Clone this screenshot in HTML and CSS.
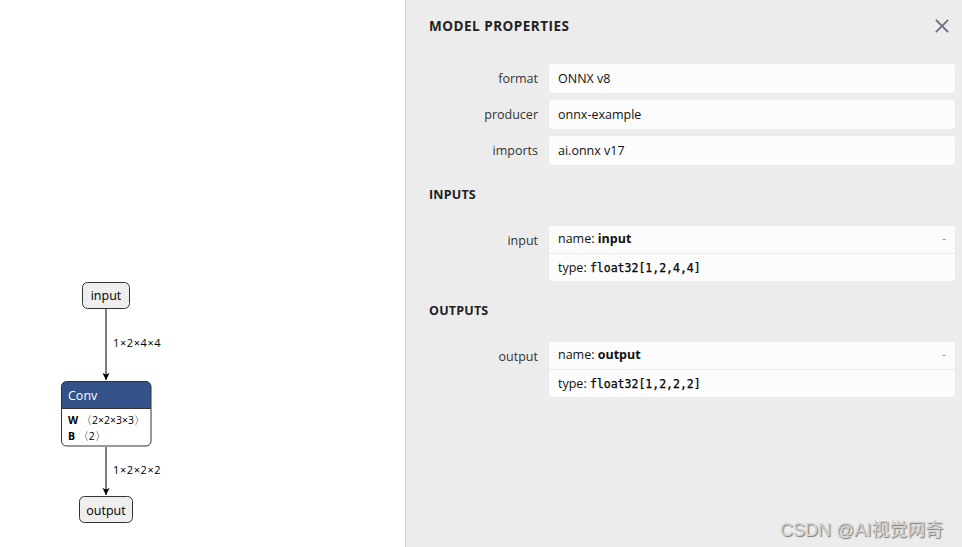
FILE: index.html
```html
<!DOCTYPE html>
<html>
<head>
<meta charset="utf-8">
<link rel="stylesheet" href="styles.css">
</head>
<body>
<div class="app">
  <div class="canvas">
    <svg class="graph" width="405" height="547" viewBox="0 0 405 547">
      <defs>
        <marker id="arrow" markerWidth="8" markerHeight="8" refX="7" refY="4" orient="auto" markerUnits="userSpaceOnUse">
          <path d="M0,0.5 L7,4 L0,7.5 L1.5,4 Z" fill="#000"/>
        </marker>
      </defs>
      <line x1="106" y1="308" x2="106" y2="380" stroke="#000" stroke-width="1" marker-end="url(#arrow)"/>
      <line x1="106" y1="447" x2="106" y2="495" stroke="#000" stroke-width="1" marker-end="url(#arrow)"/>
      <text class="edge" x="113" y="347">1×2×4×4</text>
      <text class="edge" x="113" y="474">1×2×2×2</text>

      <rect x="82.5" y="282.5" width="47" height="26" rx="5" fill="#eee" stroke="#333"/>
      <text class="nodetext" x="106" y="300" text-anchor="middle">input</text>

      <g>
        <path d="M61.5,408 V386.5 a5,5 0 0 1 5,-5 H146 a5,5 0 0 1 5,5 V408 Z" fill="#335289"/>
        <path d="M61.5,408 H151 V441 a5,5 0 0 1 -5,5 H66.5 a5,5 0 0 1 -5,-5 Z" fill="#fff"/>
        <rect x="61.5" y="381.5" width="89.5" height="64.5" rx="5" fill="none" stroke="#333"/>
        <line x1="61.5" y1="408.5" x2="151" y2="408.5" stroke="#333"/>
        <text class="nodetext white" x="68" y="400">Conv</text>
        <text class="attr" x="68" y="424"><tspan class="b">W</tspan> 〈2×2×3×3〉</text>
        <text class="attr" x="68" y="440"><tspan class="b">B</tspan> 〈2〉</text>
      </g>

      <rect x="79.5" y="496.5" width="53" height="26" rx="5" fill="#eee" stroke="#333"/>
      <text class="nodetext" x="106" y="515" text-anchor="middle">output</text>
    </svg>
    <div class="watermark">CSDN @AI视觉网奇</div>
  </div>

  <aside class="panel">
    <div class="panel-head">
      <h1 class="title">MODEL PROPERTIES</h1>
      <svg class="close" width="14" height="14" viewBox="0 0 14 14">
        <path d="M1.5,1.5 L12.5,12.5 M12.5,1.5 L1.5,12.5" stroke="#6a7380" stroke-width="1.8" stroke-linecap="square"/>
      </svg>
    </div>

    <div class="props">
      <div class="label">format</div><div class="value">ONNX v8</div>
      <div class="label">producer</div><div class="value">onnx-example</div>
      <div class="label">imports</div><div class="value">ai.onnx v17</div>
    </div>

    <h2 class="section">INPUTS</h2>
    <div class="props">
      <div class="label">input</div>
      <div class="value multi">
        <div class="line top"><span>name: <b>input</b></span><span class="dash">-</span></div>
        <div class="line">type: <code>float32[1,2,4,4]</code></div>
      </div>
    </div>

    <h2 class="section">OUTPUTS</h2>
    <div class="props">
      <div class="label">output</div>
      <div class="value multi">
        <div class="line top"><span>name: <b>output</b></span><span class="dash">-</span></div>
        <div class="line">type: <code>float32[1,2,2,2]</code></div>
      </div>
    </div>
  </aside>
</div>
</body>
</html>
```

FILE: styles.css
```css
html, body {
  margin: 0;
  padding: 0;
  width: 962px;
  height: 547px;
  overflow: hidden;
  background: #fff;
  font-family: "Open Sans", "Noto Sans", sans-serif;
}

.app {
  display: flex;
  width: 962px;
  height: 547px;
}

.canvas {
  position: relative;
  width: 405px;
  height: 547px;
  flex: none;
}

.graph {
  display: block;
}

.graph .edge {
  font-family: "Open Sans", sans-serif;
  font-size: 11px;
  letter-spacing: 0.6px;
  fill: #000;
}

.graph .nodetext {
  font-family: "Open Sans", sans-serif;
  font-size: 12.5px;
  fill: #000;
}

.graph .nodetext.white {
  fill: #fff;
}

.graph .attr {
  font-family: "Open Sans", sans-serif;
  font-size: 10.5px;
  fill: #000;
}

.graph .attr .b {
  font-weight: 700;
}

.watermark {
  position: absolute;
  left: 780px;
  top: 515px;
  font-family: "Liberation Sans", "Noto Sans CJK SC", sans-serif;
  font-size: 18px;
  color: #d2d2d2;
  text-shadow: 1px 1px 1px #777;
  white-space: nowrap;
  z-index: 2;
}

.panel {
  flex: 1;
  background: #ececec;
  border-left: 1px solid #d4d4d4;
  padding: 15px 7px 0 23px;
  display: flex;
  flex-direction: column;
  color: #000;
  font-size: 12.5px;
}

.panel-head {
  display: flex;
  justify-content: space-between;
  align-items: center;
  height: 21px;
  padding-right: 6px;
}

.title {
  margin: 0;
  font-size: 13.5px;
  font-weight: 700;
  letter-spacing: 0.5px;
  color: #222;
}

.close {
  display: block;
}

.props {
  display: grid;
  grid-template-columns: 109px 1fr;
  column-gap: 11px;
  row-gap: 7px;
  margin-top: 28px;
}

.label {
  text-align: right;
  color: #333;
  line-height: 29px;
  white-space: nowrap;
}

.value {
  background: #fcfcfc;
  border-radius: 3px;
  height: 29px;
  line-height: 29px;
  padding: 0 9px;
  color: #111;
}

.value.multi {
  height: auto;
  padding: 0;
}

.line {
  height: 27px;
  line-height: 27px;
  padding: 0 9px;
}

.line.top {
  border-bottom: 1px solid #ececec;
  display: flex;
  justify-content: space-between;
  line-height: 26px;
}

.line b {
  font-weight: 700;
}

.dash {
  color: #999;
  padding-right: 0;
}

code {
  font-family: "DejaVu Sans Mono", "Liberation Mono", monospace;
  font-size: 11.5px;
  font-weight: 400;
  color: #000;
  -webkit-text-stroke: 0.25px #000;
}

.section {
  margin: 20px 0 0 0;
  font-size: 12.5px;
  font-weight: 700;
  letter-spacing: 0.2px;
  color: #222;
  height: 20px;
  line-height: 20px;
}

.section + .props {
  margin-top: 21px;
}
```
